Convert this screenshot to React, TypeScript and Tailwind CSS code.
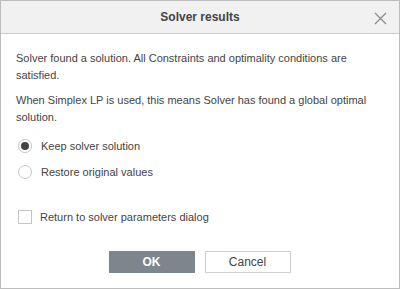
import React from "react";

export default function App() {
  return (
    <div className="w-[400px] h-[289px] bg-white border border-[#bdbdbd] flex flex-col text-[#444]" style={{ fontFamily: '"Liberation Sans", Arial, sans-serif' }}>
      <div className="relative h-[33px] shrink-0 bg-[#f1f1f1] border-b border-[#cbcbcb] flex items-center justify-center">
        <span className="text-[12px] font-bold text-[#444]">Solver results</span>
        <svg className="absolute right-[12px] top-[11px]" width="13" height="13" viewBox="0 0 13 13">
          <path d="M1 1 L12 12 M12 1 L1 12" stroke="#8a8a8a" strokeWidth="1.2" fill="none" />
        </svg>
      </div>
      <div className="flex flex-col px-[15px] pt-[16px] text-[11px] leading-[17px]">
        <p>Solver found a solution. All Constraints and optimality conditions are satisfied.</p>
        <p className="mt-[8px]">When Simplex LP is used, this means Solver has found a global optimal solution.</p>
        <div className="mt-[10px] flex flex-col gap-[6px]">
          <div className="flex items-center h-[20px]">
            <span className="w-[14px] h-[14px] rounded-full border border-[#c4c4c4] flex items-center justify-center ml-[2px]">
              <span className="w-[8px] h-[8px] rounded-full bg-[#444]" />
            </span>
            <span className="ml-[9px]">Keep solver solution</span>
          </div>
          <div className="flex items-center h-[20px]">
            <span className="w-[14px] h-[14px] rounded-full border border-[#c4c4c4] ml-[2px]" />
            <span className="ml-[9px]">Restore original values</span>
          </div>
        </div>
        <div className="mt-[25px] flex items-center h-[20px]">
          <span className="w-[14px] h-[14px] border border-[#c4c4c4] ml-[2px]" />
          <span className="ml-[8px]">Return to solver parameters dialog</span>
        </div>
        <div className="mt-[24px] flex justify-center gap-[10px] ml-[-1px]">
          <button className="w-[86px] h-[22px] bg-[#7d868c] text-white font-bold text-[12px]">OK</button>
          <button className="w-[86px] h-[22px] bg-white border border-[#cfcfcf] text-[#444] text-[12px]">Cancel</button>
        </div>
      </div>
    </div>
  );
}
